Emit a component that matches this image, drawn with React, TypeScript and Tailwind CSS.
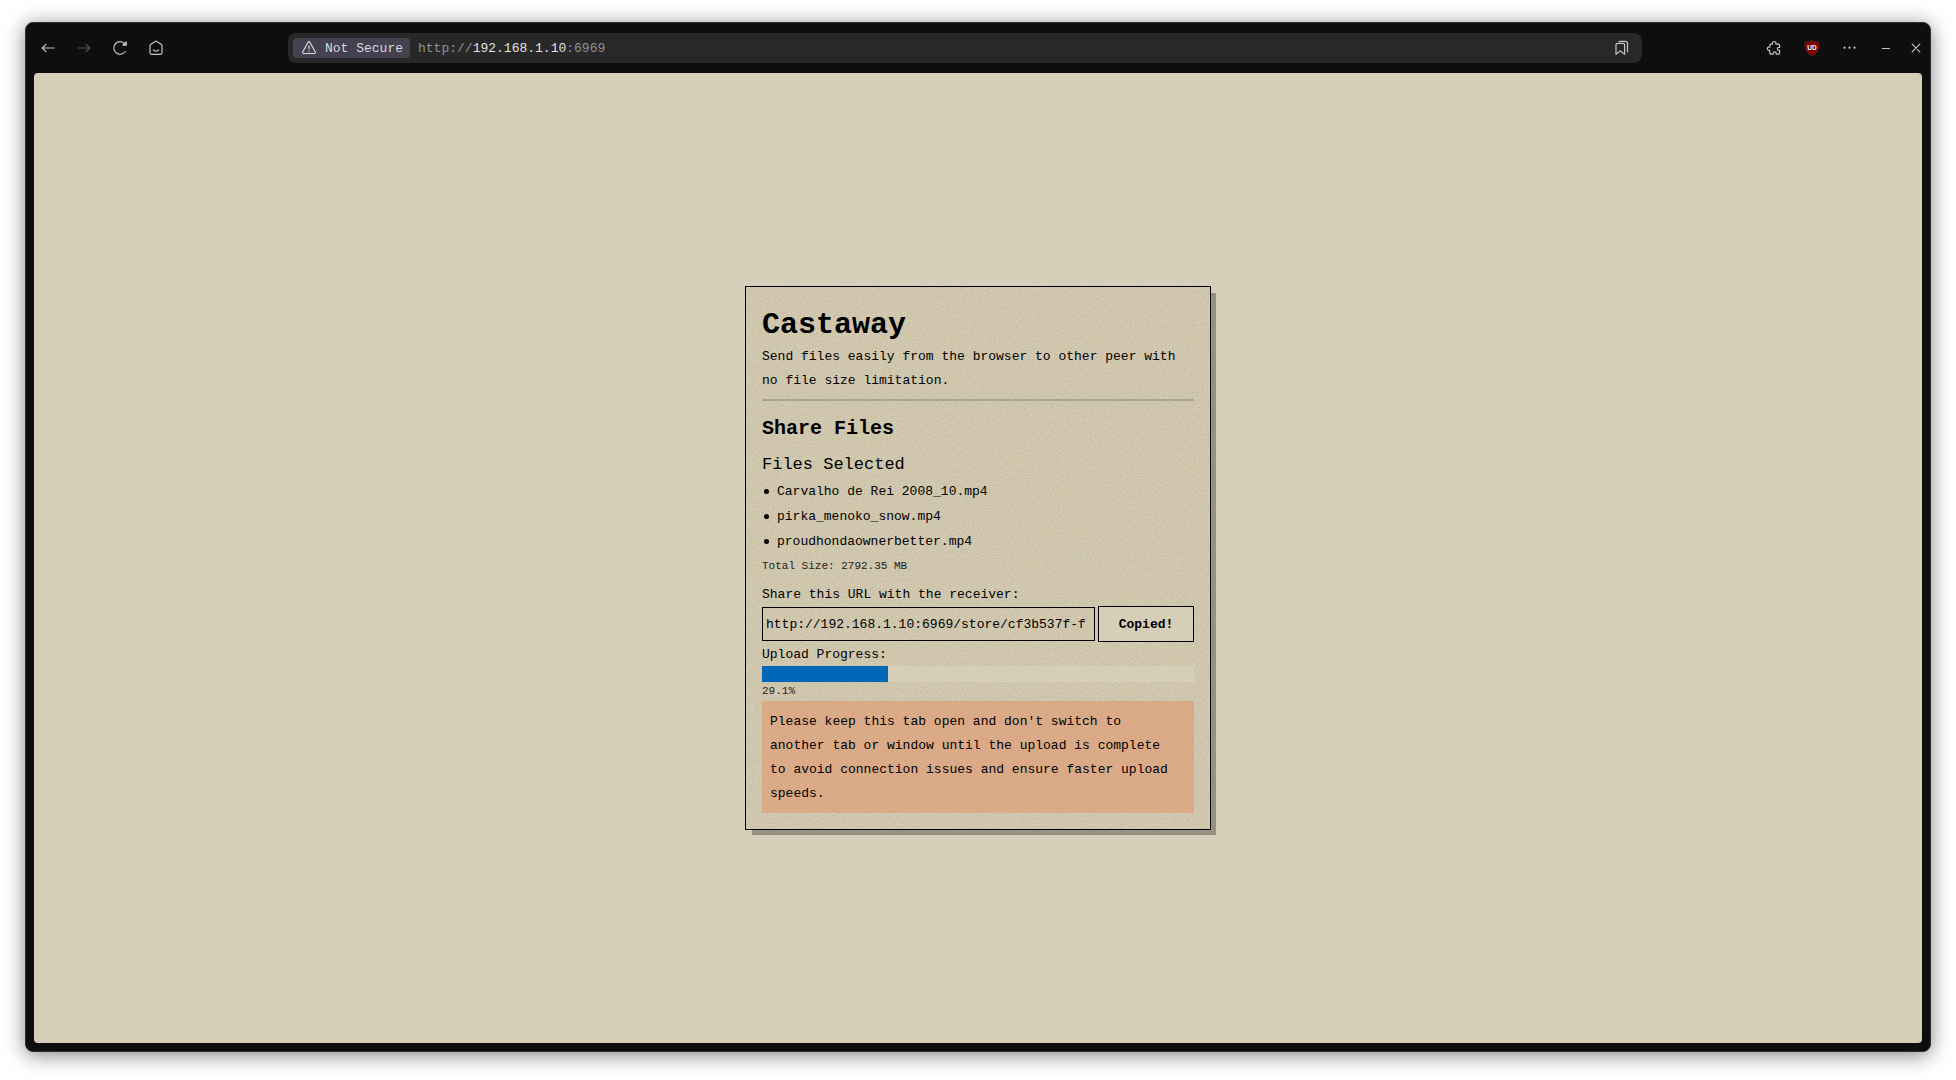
import React from 'react';

type IconProps = { children: React.ReactNode; className?: string };

function Icon({ children, className = '' }: IconProps) {
  return (
    <svg
      viewBox="0 0 16 16"
      className={`size-4 shrink-0 ${className}`}
      fill="none"
      stroke="currentColor"
      strokeWidth="1.2"
      strokeLinecap="round"
      strokeLinejoin="round"
      aria-hidden="true"
    >
      {children}
    </svg>
  );
}

function ToolButton({ label, children, className = '' }: IconProps & { label: string }) {
  return (
    <button type="button" aria-label={label} className={`flex h-7 items-center justify-center text-[#c4c4c4] ${className}`}>
      {children}
    </button>
  );
}

function Toolbar() {
  return (
    <header className="flex h-[50px] shrink-0 items-center">
      <nav className="flex w-[262px] shrink-0 items-center pl-1">
        <ToolButton label="Back" className="w-9">
          <Icon><path d="M14 8H2.3M6 4.300 2.300 8l3.700 3.700" /></Icon>
        </ToolButton>
        <ToolButton label="Forward" className="w-9">
          <Icon className="text-[#555555]"><path d="M2 8h11.7M10 4.300l3.700 3.700-3.700 3.700" /></Icon>
        </ToolButton>
        <ToolButton label="Reload" className="w-9">
          <Icon><path d="M13.300 11.500A6.300 6.300 0 1 1 12.900 3.900L14 5M14.300 1.800v3.400h-3.400z" /></Icon>
        </ToolButton>
        <ToolButton label="Home" className="w-9">
          <Icon><path d="M2 5.8c0-.5.2-.9.6-1.2L7.2 1.4c.5-.4 1.1-.4 1.6 0l4.6 3.2c.4.3.6.7.6 1.2v7c0 .9-.6 1.5-1.500 1.500h-9C2.600 14.300 2 13.700 2 12.800zM5.300 9.900c1.400 1.500 4 1.500 5.400 0" /></Icon>
        </ToolButton>
      </nav>

      <div className="flex h-[30px] min-w-0 flex-1 items-center rounded-lg bg-[#282828] pl-[5px] pr-3 font-['Liberation_Mono',monospace] text-[13px]">
        <button type="button" className="flex h-5 shrink-0 items-center gap-2 rounded bg-[#444150] pr-[7px] pl-2 text-[#d9d9dc]">
          <Icon><path d="M7.100 2.200c.4-.7 1.400-.7 1.800 0l5.400 9.800c.4.700-.1 1.500-.9 1.500H2.600c-.8 0-1.300-.8-.9-1.500zM8 5.800v3.200M8 11v.3" /></Icon>
          <span className="pt-px">Not Secure</span>
        </button>
        <span className="min-w-0 flex-1 truncate pt-px pl-2 text-[#919191]">
          http://<span className="text-[#e2e2e2]">192.168.1.10</span>:6969
        </span>
        <ToolButton label="Bookmark this page">
          <Icon>
            <path d="M3.500 3.300h5.600c.9 0 1.500.6 1.500 1.500v9.500l-4.300-3.400-4.300 3.400V4.800c0-.9.600-1.500 1.500-1.500z" />
            <path d="M5 1.300h6.500a2 2 0 0 1 2 2v8.500" />
          </Icon>
        </ToolButton>
      </div>

      <div className="flex w-[288px] shrink-0 items-center justify-end pr-0.5">
        <ToolButton label="Extensions" className="w-9">
          <Icon><path d="M5.200 4.200h1.200V3.300a1.800 1.800 0 0 1 3.600 0v.9h2.400c.7 0 1.200.5 1.200 1.200v2h-.8a1.500 1.500 0 0 0 0 3h.8v2.500c0 .7-.5 1.200-1.200 1.200h-2.200v-.8a1.500 1.500 0 0 0-3 0v.8H5c-.7 0-1.200-.5-1.200-1.200v-2.500h-.9a1.600 1.600 0 0 1 0-3.200h.9V5.500c0-.8.6-1.300 1.400-1.300z" /></Icon>
        </ToolButton>
        <ToolButton label="Content blocker" className="w-10">
          <svg viewBox="0 0 16 16" className="size-4" aria-hidden="true">
            <path d="M8 .2c2 1.500 4.300 2 7 2 0 7.500-.5 10.600-7 13.600C1.500 12.800 1 9.700 1 2.200c2.700 0 5-.5 7-2z" fill="#800000" stroke="#4a3a3a" strokeWidth=".5" />
            <text x="8" y="9.800" textAnchor="middle" fill="#ffffff" fontFamily="Liberation Sans, sans-serif" fontWeight="bold" fontSize="6.500">UD</text>
          </svg>
        </ToolButton>
        <ToolButton label="Menu" className="w-9">
          <Icon>
            <g fill="currentColor" stroke="none">
              <circle cx="2.500" cy="7.700" r="1.100" />
              <circle cx="7.500" cy="7.700" r="1.100" />
              <circle cx="12.500" cy="7.700" r="1.100" />
            </g>
          </Icon>
        </ToolButton>
        <ToolButton label="Minimize" className="w-9">
          <Icon><path d="M4.500 8.500h7" /></Icon>
        </ToolButton>
        <ToolButton label="Close" className="w-6">
          <Icon><path d="m4.200 4.200 7.600 7.600M11.800 4.200l-7.600 7.600" /></Icon>
        </ToolButton>
      </div>
    </header>
  );
}

function Grain() {
  return (
    <svg className="pointer-events-none absolute inset-0 size-full" aria-hidden="true">
      <filter id="grain" x="0" y="0" width="100%" height="100%" colorInterpolationFilters="sRGB">
        <feTurbulence type="fractalNoise" baseFrequency="0.65" numOctaves="3" stitchTiles="stitch" />
        <feColorMatrix values="0 0 0 0 0.66  0 0 0 0 0.59  0 0 0 0 0.4  0.55 0 0 0 -0.13" />
      </filter>
      <rect width="100%" height="100%" filter="url(#grain)" />
    </svg>
  );
}

const files = ['Carvalho de Rei 2008_10.mp4', 'pirka_menoko_snow.mp4', 'proudhondaownerbetter.mp4'];
const progress = 29.1;

function ShareCard() {
  return (
    <section className="relative w-[466px] max-w-full border border-black bg-[#d6ceb9] p-4 shadow-[6px_6px_0_-1px_#969180]">
      <Grain />
      <div className="relative">
        <h1 className="pt-[5px] text-[30px] leading-[35px] font-bold">Castaway</h1>
        <p className="mt-0.5 leading-6">Send files easily from the browser to other peer with no file size limitation.</p>
        <hr className="mt-1.5 border-t-2 border-[#aaa590]" />
        <h2 className="mt-3.5 text-[20px] leading-7 font-bold">Share Files</h2>
        <h3 className="mt-2.5 text-[17px] leading-6">Files Selected</h3>
        <ul className="mt-0.5">
          {files.map((name) => (
            <li key={name} className="flex items-center gap-2 pl-0.5 leading-[25px] before:size-[5px] before:rounded-full before:bg-black">
              {name}
            </li>
          ))}
        </ul>
        <p className="mt-0.5 text-[11px] leading-5 text-[#24221c]">Total Size: 2792.35 MB</p>
        <label htmlFor="share-url" className="mt-2 block leading-[22px]">Share this URL with the receiver:</label>
        <div className="flex items-center gap-[3px]">
          <input
            id="share-url"
            readOnly
            value="http://192.168.1.10:6969/store/cf3b537f-f"
            className="h-[34px] min-w-0 flex-1 border border-black bg-transparent px-[3px] pt-px outline-none"
          />
          <button type="button" className="h-9 w-24 border border-black bg-[#d6ceb9] pt-px font-bold">Copied!</button>
        </div>
        <p id="upload-label" className="mt-0.5 leading-[22px]">Upload Progress:</p>
        <div role="progressbar" aria-labelledby="upload-label" aria-valuenow={progress} className="h-4 bg-[#d6ceb9]">
          <div className="h-full bg-[#0066b8]" style={{ width: `${progress}%` }} />
        </div>
        <p className="text-[11px] leading-[19px] text-[#24221c]">{progress}%</p>
        <p className="bg-[#e58e61]/50 pt-[9px] pr-4 pb-[7px] pl-2 leading-6">
          Please keep this tab open and don't switch to another tab or window until the upload is complete to avoid
          connection issues and ensure faster upload speeds.
        </p>
      </div>
    </section>
  );
}

export default function App() {
  return (
    <div className="flex min-h-screen flex-col bg-white px-[25px] pt-[22px] pb-7">
      <div className="flex flex-1 flex-col rounded-lg border border-[#303030] bg-[#0e0e0e] px-2 pb-2 shadow-[0_3px_20px_rgba(0,0,0,0.5)]">
        <div className="-mx-2">
          <Toolbar />
        </div>
        <main className="flex flex-1 items-center justify-center rounded bg-[#d6ceb9] font-['Liberation_Mono',monospace] text-[13px] text-black">
          <ShareCard />
        </main>
      </div>
    </div>
  );
}
